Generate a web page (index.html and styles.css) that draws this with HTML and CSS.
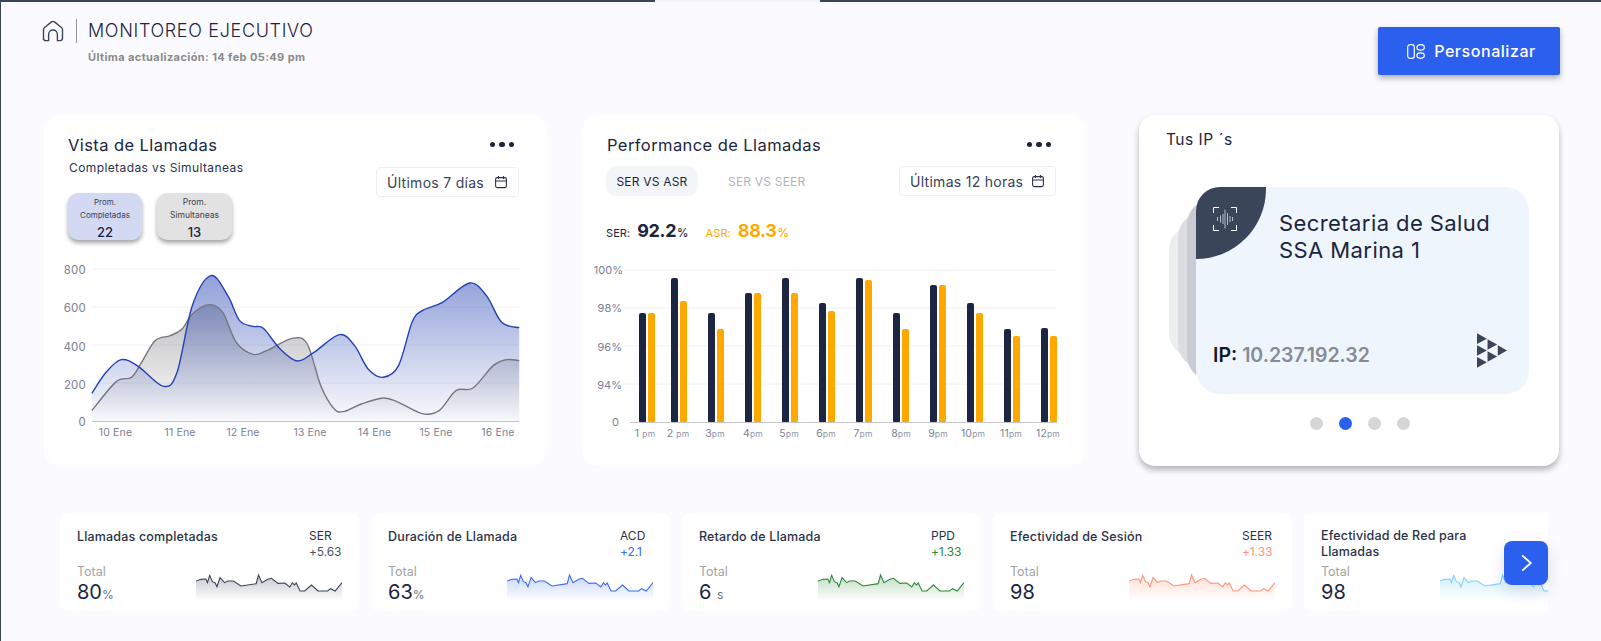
FILE: index.html
```html
<!DOCTYPE html>
<html lang="es">
<head>
<meta charset="utf-8">
<title>Monitoreo Ejecutivo</title>
<link rel="stylesheet" href="styles.css">
</head>
<body>
<svg class="defs" aria-hidden="true">
  <defs>
    <path id="spark-line" vector-effect="non-scaling-stroke" d="M407 230L420 225 433 224 437 235 443 213 450 232 457 235 462 247 470 220 482 235 490 230 505 230 525 245 565 238 571 212 580 235 595 225 605 222 622 237 640 236 653 248 660 235 665 242 670 236 680 260 692 260 710 242 727 260 752 260 760 253 772 260 790 235"/>
    <path id="spark-area" d="M407 230L420 225 433 224 437 235 443 213 450 232 457 235 462 247 470 220 482 235 490 230 505 230 525 245 565 238 571 212 580 235 595 225 605 222 622 237 640 236 653 248 660 235 665 242 670 236 680 260 692 260 710 242 727 260 752 260 760 253 772 260 790 235V290H407Z"/>
    <linearGradient id="sg-dark" x1="0" y1="0" x2="0" y2="1"><stop offset="0" stop-color="#3a455a" stop-opacity=".3"/><stop offset="1" stop-color="#3a455a" stop-opacity="0"/></linearGradient>
    <linearGradient id="sg-blue" x1="0" y1="0" x2="0" y2="1"><stop offset="0" stop-color="#3d6cf0" stop-opacity=".28"/><stop offset="1" stop-color="#3d6cf0" stop-opacity="0"/></linearGradient>
    <linearGradient id="sg-green" x1="0" y1="0" x2="0" y2="1"><stop offset="0" stop-color="#2e8b37" stop-opacity=".3"/><stop offset="1" stop-color="#2e8b37" stop-opacity="0"/></linearGradient>
    <linearGradient id="sg-salmon" x1="0" y1="0" x2="0" y2="1"><stop offset="0" stop-color="#ff9478" stop-opacity=".3"/><stop offset="1" stop-color="#ff9478" stop-opacity="0"/></linearGradient>
    <linearGradient id="sg-sky" x1="0" y1="0" x2="0" y2="1"><stop offset="0" stop-color="#7fd3f7" stop-opacity=".35"/><stop offset="1" stop-color="#7fd3f7" stop-opacity="0"/></linearGradient>
    <linearGradient id="area-blue" gradientUnits="userSpaceOnUse" x1="0" y1="80" x2="0" y2="517"><stop offset="0" stop-color="#2240b0" stop-opacity=".5"/><stop offset="1" stop-color="#2240b0" stop-opacity=".02"/></linearGradient>
    <linearGradient id="area-gray" gradientUnits="userSpaceOnUse" x1="0" y1="167" x2="0" y2="517"><stop offset="0" stop-color="#404048" stop-opacity=".34"/><stop offset="1" stop-color="#404048" stop-opacity=".01"/></linearGradient>
    <symbol id="cal" viewBox="0 0 14 14">
      <rect x="1.6" y="2.6" width="10.8" height="10" rx="1.6"/>
      <path d="M1.6 6h10.8M4.5 1v3M9.5 1v3"/>
    </symbol>
  </defs>
</svg>

<div class="topbar"><span class="seg-a"></span><span class="seg-b"></span><span class="seg-c"></span></div>

<main class="page">
  <header class="header">
    <div class="head-left">
      <div class="head-title">
        <svg class="home" viewBox="0 0 22 22"><path d="M1.5 20V9.6Q1.5 8.4 2.6 7.5L9.5 1.9Q11 .8 12.5 1.9L19.4 7.5Q20.5 8.4 20.5 9.6V18Q20.5 20.6 18 20.6H15.4V14.4A4.4 4.4 0 0 0 6.6 14.4V20.6H4Q1.500 20.6 1.500 18Z"/></svg>
        <h1>MONITOREO EJECUTIVO</h1>
      </div>
      <p class="updated">Última actualización: 14 feb 05:49 pm</p>
    </div>
    <button class="btn-custom">
      <svg class="ico-custom" viewBox="0 0 18 15"><rect x=".7" y=".7" width="6.6" height="13.6" rx="2.4"/><ellipse cx="13.6" cy="3.4" rx="3.7" ry="2.7"/><ellipse cx="13.6" cy="11.6" rx="3.7" ry="2.7"/></svg>
      <span>Personalizar</span>
    </button>
  </header>

  <section class="top-row">
    <article class="card">
      <div class="card-top">
        <div class="title-row">
          <h2>Vista de Llamadas</h2>
          <div class="more"><i></i><i></i><i></i></div>
        </div>
        <div class="filter-row">
          <div>
            <p class="sub">Completadas vs Simultaneas</p>
            <div class="pills">
              <div class="pill pill-blue"><span>Prom.</span><span>Completadas</span><b>22</b></div>
              <div class="pill pill-gray"><span>Prom.</span><span>Simultaneas</span><b>13</b></div>
            </div>
          </div>
          <div class="select select-7"><span>Últimos 7 días</span><svg class="cal"><use href="#cal"/></svg></div>
        </div>
      </div>
      <svg class="chart chart-a" viewBox="44 258 503 187" width="503" height="187">
        <g class="grid">
          <path d="M92 270H519M92 308H519M92 346H519M92 384H519"/>
        </g>
        <path class="base" d="M92 422.5H519"/>
        <g transform="translate(30 250) scale(.3381 .3333)">
          <path class="js-curve area-gray" data-close="1" data-pts="183,485 255,398 300,385 330,340 370,275 415,260 450,240 480,195 530,167 570,190 610,280 660,316 700,305 775,268 820,285 860,410 900,480 930,487 980,465 1045,447 1090,460 1160,494 1210,485 1260,425 1310,417 1370,350 1410,332 1447,335"/>
          <path class="js-curve area-blue" data-close="1" data-pts="183,433 225,370 270,332 320,352 395,412 435,370 480,170 535,80 585,140 620,215 660,232 690,238 740,300 790,336 840,310 915,257 960,290 1000,360 1045,385 1090,350 1130,220 1160,185 1220,160 1300,102 1350,140 1395,220 1447,236"/>
          <path class="js-curve line-gray" data-pts="183,485 255,398 300,385 330,340 370,275 415,260 450,240 480,195 530,167 570,190 610,280 660,316 700,305 775,268 820,285 860,410 900,480 930,487 980,465 1045,447 1090,460 1160,494 1210,485 1260,425 1310,417 1370,350 1410,332 1447,335"/>
          <path class="js-curve line-blue" data-pts="183,433 225,370 270,332 320,352 395,412 435,370 480,170 535,80 585,140 620,215 660,232 690,238 740,300 790,336 840,310 915,257 960,290 1000,360 1045,385 1090,350 1130,220 1160,185 1220,160 1300,102 1350,140 1395,220 1447,236"/>
        </g>
        <g class="ax-y">
          <text x="86" y="275">800</text><text x="86" y="313">600</text><text x="86" y="352">400</text><text x="86" y="390">200</text><text x="86" y="427">0</text>
        </g>
        <g class="ax-x">
          <text x="115.5" y="437">10 Ene</text><text x="180" y="437">11 Ene</text><text x="243" y="437">12 Ene</text><text x="310" y="437">13 Ene</text><text x="374.5" y="437">14 Ene</text><text x="436" y="437">15 Ene</text><text x="498" y="437">16 Ene</text>
        </g>
      </svg>
    </article>

    <article class="card">
      <div class="card-top card-top-b">
        <div class="title-row">
          <h2>Performance de Llamadas</h2>
          <div class="more"><i></i><i></i><i></i></div>
        </div>
        <div class="filter-row filter-row-b">
          <div class="tabs"><span class="tab tab-on">SER VS ASR</span><span class="tab">SER VS SEER</span></div>
          <div class="select select-12"><span>Últimas 12 horas</span><svg class="cal"><use href="#cal"/></svg></div>
        </div>
        <div class="stats">
          <span class="stat"><small>SER:</small><b>92.2</b><em>%</em></span>
          <span class="stat stat-o"><small>ASR:</small><b>88.3</b><em>%</em></span>
        </div>
      </div>
      <svg class="chart chart-b" viewBox="582 258 503 187" width="503" height="187">
        <g class="grid"><path d="M621 270H1057M621 308H1057M621 346H1057M621 384H1057"/></g>
        <g class="bars-n">
          <rect x="639" y="313" width="7" height="110" rx="2"/><rect x="671" y="278" width="7" height="145" rx="2"/><rect x="708" y="313" width="7" height="110" rx="2"/><rect x="745" y="293" width="7" height="130" rx="2"/><rect x="782" y="278" width="7" height="145" rx="2"/><rect x="819" y="303" width="7" height="120" rx="2"/><rect x="856" y="278" width="7" height="145" rx="2"/><rect x="893" y="313" width="7" height="110" rx="2"/><rect x="930" y="285" width="7" height="138" rx="2"/><rect x="967" y="303" width="7" height="120" rx="2"/><rect x="1004" y="329" width="7" height="94" rx="2"/><rect x="1041" y="328" width="7" height="95" rx="2"/>
        </g>
        <g class="bars-o">
          <rect x="648" y="313" width="7" height="110" rx="2"/><rect x="680" y="301" width="7" height="122" rx="2"/><rect x="717" y="329" width="7" height="94" rx="2"/><rect x="754" y="293" width="7" height="130" rx="2"/><rect x="791" y="293" width="7" height="130" rx="2"/><rect x="828" y="311" width="7" height="112" rx="2"/><rect x="865" y="280" width="7" height="143" rx="2"/><rect x="902" y="329" width="7" height="94" rx="2"/><rect x="939" y="285" width="7" height="138" rx="2"/><rect x="976" y="313" width="7" height="110" rx="2"/><rect x="1013" y="336" width="7" height="87" rx="2"/><rect x="1050" y="336" width="7" height="87" rx="2"/>
        </g>
        <path class="base" d="M630 422.5H1057"/>
        <g class="ax-y ax-pct">
          <text x="623" y="273.5">100%</text><text x="622" y="311.500">98%</text><text x="622" y="350.500">96%</text><text x="622" y="388.500">94%</text><text x="619" y="426">0</text>
        </g>
        <g class="ax-x ax-h">
          <text x="645" y="437">1 <tspan>pm</tspan></text><text x="678" y="437">2 <tspan>pm</tspan></text><text x="715" y="437">3<tspan>pm</tspan></text><text x="753" y="437">4<tspan>pm</tspan></text><text x="789" y="437">5<tspan>pm</tspan></text><text x="826" y="437">6<tspan>pm</tspan></text><text x="863" y="437">7<tspan>pm</tspan></text><text x="901" y="437">8<tspan>pm</tspan></text><text x="938" y="437">9<tspan>pm</tspan></text><text x="973" y="437">10<tspan>pm</tspan></text><text x="1011" y="437">11<tspan>pm</tspan></text><text x="1048" y="437">12<tspan>pm</tspan></text>
        </g>
      </svg>
    </article>

    <article class="card card-ip">
      <h3>Tus IP ´s</h3>
      <div class="stage">
        <span class="layer layer-3"></span>
        <span class="layer layer-2"></span>
        <span class="layer layer-1"></span>
        <div class="ipcard">
          <div class="corner">
            <svg class="scan" viewBox="0 0 24 24"><path class="scan-f" d="M6 .5H.5V6M18 .5H23.5V6M6 23.5H.5V18M18 23.5H23.5V18"/><path class="scan-b" d="M4.500 10V14M7.500 8.500V15.500M10 7V17M12 2.500V21.500M14.500 6V18M17 9V15M19.500 10V14"/></svg>
          </div>
          <div class="ip-name">Secretaria de Salud<br>SSA Marina 1</div>
          <div class="ip-foot">
            <div class="ip-addr"><b>IP:</b> <span>10.237.192.32</span></div>
            <svg class="ip-logo" viewBox="1041 700 91 104"><path d="M1041 700L1071 716 1041 732ZM1041 736L1071 752 1041 768ZM1041 772L1071 788 1041 804ZM1073 718L1102 734 1073 750ZM1073 754L1102 770 1073 786ZM1104 736L1132 752 1104 768Z"/></svg>
          </div>
        </div>
      </div>
      <div class="dots"><i></i><i class="on"></i><i></i><i></i></div>
    </article>
  </section>

  <section class="kpi-wrap">
    <div class="kpi-row">
      <article class="kpi kpi-dark">
        <div class="kpi-head"><h4>Llamadas completadas</h4><div class="kpi-delta"><span>SER</span><span class="d">+5.63</span></div></div>
        <div class="kpi-foot">
          <div class="kpi-val"><span class="t">Total</span><span class="v">80<small>%</small></span></div>
          <svg class="spark" viewBox="407 200 383 90" preserveAspectRatio="none"><use href="#spark-area" fill="url(#sg-dark)"/><use href="#spark-line" class="sl"/></svg>
        </div>
      </article>
      <article class="kpi kpi-blue">
        <div class="kpi-head"><h4>Duración de Llamada</h4><div class="kpi-delta"><span>ACD</span><span class="d">+2.1</span></div></div>
        <div class="kpi-foot">
          <div class="kpi-val"><span class="t">Total</span><span class="v">63<small>%</small></span></div>
          <svg class="spark" viewBox="407 200 383 90" preserveAspectRatio="none"><use href="#spark-area" fill="url(#sg-blue)"/><use href="#spark-line" class="sl"/></svg>
        </div>
      </article>
      <article class="kpi kpi-green">
        <div class="kpi-head"><h4>Retardo de Llamada</h4><div class="kpi-delta"><span>PPD</span><span class="d">+1.33</span></div></div>
        <div class="kpi-foot">
          <div class="kpi-val"><span class="t">Total</span><span class="v">6 <small>s</small></span></div>
          <svg class="spark" viewBox="407 200 383 90" preserveAspectRatio="none"><use href="#spark-area" fill="url(#sg-green)"/><use href="#spark-line" class="sl"/></svg>
        </div>
      </article>
      <article class="kpi kpi-salmon">
        <div class="kpi-head"><h4>Efectividad de Sesión</h4><div class="kpi-delta"><span>SEER</span><span class="d">+1.33</span></div></div>
        <div class="kpi-foot">
          <div class="kpi-val"><span class="t">Total</span><span class="v">98</span></div>
          <svg class="spark" viewBox="407 200 383 90" preserveAspectRatio="none"><use href="#spark-area" fill="url(#sg-salmon)"/><use href="#spark-line" class="sl"/></svg>
        </div>
      </article>
      <article class="kpi kpi-sky">
        <div class="kpi-head"><h4 class="wrap">Efectividad de Red para Llamadas</h4></div>
        <div class="kpi-foot">
          <div class="kpi-val"><span class="t">Total</span><span class="v">98</span></div>
          <svg class="spark" viewBox="407 200 383 90" preserveAspectRatio="none"><use href="#spark-area" fill="url(#sg-sky)"/><use href="#spark-line" class="sl"/></svg>
        </div>
      </article>
    </div>
    <button class="next" aria-label="Siguiente"><svg viewBox="0 0 12 18"><path d="M2 2L10 9 2 16"/></svg></button>
  </section>
</main>
<script src="script.js"></script>
</body>
</html>
```

FILE: styles.css
```css
* { box-sizing: border-box; }
html, body { margin: 0; padding: 0; height: 641px; overflow: hidden; }
body {
  background: #fafaff;
  border-left: 1px solid #3a455a;
  font-family: "Inter", "Liberation Sans", sans-serif;
  color: #1c2540;
}
.defs { position: absolute; width: 0; height: 0; }
h1, h2, h3, h4, p { margin: 0; font-weight: 400; }

.topbar { display: flex; height: 2px; }
.seg-a { width: 654px; background: #3a455a; }
.seg-b { width: 165px; background: #f3f3f5; }
.seg-c { flex: 1; background: #3a455a; }

.page { padding: 0 41px 0 43px; }

.header { display: flex; justify-content: space-between; height: 113px; }
.head-left { margin-left: -2px; padding-top: 17px; }
.head-title { display: flex; align-items: center; height: 24px; }
.home { width: 22px; height: 22px; fill: none; stroke: #3a455a; stroke-width: 1.4; }
.head-title h1 {
  margin-left: 12px; padding-left: 11px; border-left: 1px solid #8d93a1;
  font-size: 18px; line-height: 24px; font-weight: 300; letter-spacing: .66px; color: #1c2540;
}
.updated { margin: 7px 0 0 46px; font-size: 11px; line-height: 14px; font-weight: 700; color: #8a8a8a; letter-spacing: .4px; }
.btn-custom {
  display: flex; align-items: center; justify-content: center; gap: 9px;
  width: 182px; height: 48px; margin-top: 25px; padding: 0 0 0 5px;
  background: #2b60ee; border: 0; border-radius: 2px; color: #fff;
  box-shadow: 0 3px 6px rgba(0, 0, 0, .32);
  font: 500 16px "Inter", sans-serif; letter-spacing: .55px;
}
.ico-custom { width: 18px; height: 15px; fill: none; stroke: #fff; stroke-width: 1.2; }

.top-row { display: flex; gap: 35px; }
.card { width: 503px; height: 351px; background: #fff; border-radius: 16px; overflow: hidden; }
.card-top { padding: 21px 28px 0 24px; }
.card-top-b { padding-left: 25px; padding-right: 29px; }
.title-row { display: flex; justify-content: space-between; align-items: center; height: 20px; }
.title-row h2 { font-size: 16.500px; line-height: 20px; font-weight: 400; letter-spacing: .42px; color: #1c2540; transform: translateY(-1px); }
.more { display: flex; gap: 4px; margin-right: 5px; margin-top: -3px; }
.more i { width: 5.500px; height: 5.500px; border-radius: 50%; background: #1c2540; }

.filter-row { display: flex; justify-content: space-between; align-items: flex-start; }
.sub { margin: 4px 0 0 1px; font-size: 12px; line-height: 16px; letter-spacing: .4px; color: #2a3248; }
.pills { display: flex; gap: 15px; margin-top: 17px; }
.pill {
  display: flex; flex-direction: column; align-items: center;
  height: 47px; padding-top: 3px; border-radius: 10px; color: #3a4256;
  font-size: 8px; line-height: 13px; box-shadow: 0 3px 4px rgba(0, 0, 0, .35);
}
.pill b { font-size: 13px; line-height: 16px; font-weight: 500; color: #1c2540; margin-top: 2px; }
.pill-blue { width: 74px; background: #d3d9f2; }
.pill-gray { width: 75px; background: #e2e2e2; font-size: 8.500px; }
.select {
  display: flex; align-items: center; justify-content: space-between;
  height: 30px; padding: 0 10px; margin-top: 11px;
  background: #fff; border: 1px solid #eceef3; border-radius: 4px;
  font-size: 14px; letter-spacing: .28px; color: #3a4256;
}
.select-7 { width: 143px; }
.select-12 { width: 157px; margin-top: 10px; }
.cal { width: 14px; height: 14px; fill: none; stroke: #2a3248; stroke-width: 1.1; flex: none; }

.filter-row-b { align-items: flex-start; }
.tabs { display: flex; gap: 20px; margin: 10px 0 0 -1px; }
.tab { display: flex; align-items: center; height: 30px; padding: 0 10px; font-size: 12px; letter-spacing: .2px; color: #b3b3c0; }
.tab-on { justify-content: center; width: 92px; background: #f3f5f9; border-radius: 10px; color: #1c2540; }
.stats { display: flex; gap: 17px; margin: 25px 0 0 -1px; height: 20px; align-items: center; }
.stat { display: flex; align-items: baseline; color: #1c2540; }
.stat small { font-size: 11px; margin-right: 7px; letter-spacing: .1px; }
.stat b { font-size: 18px; line-height: 20px; font-weight: 700; letter-spacing: -.4px; }
.stat em { font-size: 11.500px; font-style: normal; margin-left: 1px; font-weight: 500; }
.stat-o { color: #ffa800; }

.chart { display: block; }
.chart-a { margin-top: 17px; }
.chart-b { margin-top: 17px; }
.grid path { stroke: #f0f0f4; stroke-width: 1; fill: none; }
.base { stroke: #c5c5c9; stroke-width: 1; fill: none; }
.area-blue { fill: url(#area-blue); stroke: none; }
.area-gray { fill: url(#area-gray); stroke: none; }
.line-blue, .line-gray { fill: none; vector-effect: non-scaling-stroke; }
.line-blue { stroke: #2342b5; stroke-width: 1.4; }
.line-gray { stroke: #76767e; stroke-width: 1.4; }
.ax-y text { font-size: 11.500px; fill: #7b8194; text-anchor: end; letter-spacing: .2px; }
.ax-pct text { font-size: 11px; letter-spacing: 0; }
.ax-x text { font-size: 10.500px; fill: #7b8194; text-anchor: middle; letter-spacing: .15px; }
.ax-h tspan { font-size: 8.500px; fill: #9094a4; }
.bars-n rect { fill: #1c2642; }
.bars-o rect { fill: #ffa800; }

.card-ip {
  width: 420px; margin-left: 19px; padding-top: 15px;
  box-shadow: 0 4px 6px rgba(0, 0, 0, .28); overflow: visible;
}
.card-ip h3 { margin-left: 27px; font-size: 15.500px; line-height: 20px; letter-spacing: .5px; color: #1c2540; }
.stage { position: relative; margin: 37px 0 0 30px; width: 360px; height: 207px; }
.layer { position: absolute; width: 120px; border-radius: 24px; }
.layer-1 { left: 18px; top: 13px; height: 180px; background: #c8cbd3; }
.layer-2 { left: 9px; top: 26px; height: 155px; background: #dcdde0; }
.layer-3 { left: 0; top: 39px; height: 131px; background: #ecedef; }
.ipcard {
  position: absolute; left: 27px; top: 0; width: 333px; height: 207px;
  display: flex; flex-direction: column; justify-content: space-between;
  background: #eff5fd; border-radius: 24px; overflow: hidden;
  padding: 23px 22px 26px 17px;
}
.corner {
  position: absolute; left: 0; top: 0; width: 70px; height: 72px;
  background: #3a455a; border-radius: 0 0 72px 0;
  padding: 20px 0 0 17px;
}
.scan { display: block; width: 24px; height: 24px; fill: none; stroke-width: 1; }
.scan-f { stroke: #fff; }
.scan-b { stroke: #b8c0cc; }
.ip-name { margin-left: 66px; font-size: 22px; line-height: 27px; letter-spacing: .42px; color: #1c2540; }
.ip-foot { display: flex; justify-content: space-between; align-items: center; }
.ip-addr { margin-top: 8px; font-size: 19.500px; font-weight: 600; color: #868b94; }
.ip-addr b { font-weight: 600; color: #14192a; }
.ip-logo { width: 30px; height: 35px; fill: #3a455a; }
.dots { display: flex; gap: 16px; margin: 23px 0 0 171px; }
.dots i { width: 13px; height: 13px; border-radius: 50%; background: #d6d6d6; }
.dots i.on { background: #2b60ee; }

.kpi-wrap { position: relative; width: 1488px; margin: 47px 0 0 16px; }
.kpi-row { display: flex; gap: 12px; overflow: hidden; }
.kpi { flex: none; width: 299px; height: 98px; padding: 14px 0 0 17px; background: #fff; border-radius: 8px; overflow: hidden; }
.kpi-head { display: flex; height: 36px; }
.kpi-head h4 { width: 232px; font-size: 12.500px; line-height: 17px; font-weight: 500; letter-spacing: .17px; color: #2a3248; padding-top: 1px; }
.kpi-head h4.wrap { width: 165px; padding-top: 1px; line-height: 15.500px; }
.kpi-delta { display: flex; flex-direction: column; padding-top: 1px; font-size: 12px; line-height: 16px; color: #2a3248; }
.kpi-delta .d { letter-spacing: -.1px; }
.kpi-foot { display: flex; }
.kpi-val { display: flex; flex-direction: column; width: 119px; }
.t { font-size: 12.500px; line-height: 17px; color: #a3a3a3; }
.v { font-size: 20px; line-height: 24px; color: #1c2540; }
.v small { font-size: 12px; color: #6a7080; }
.spark { width: 146px; height: 30px; margin-top: 8px; display: block; }
.sl { fill: none; stroke: currentColor; stroke-width: 1.1; }
.kpi-dark .d { color: #4a5266; }
.kpi-dark .spark { color: #3a455a; }
.kpi-blue .d, .kpi-blue .spark { color: #3d6cf0; }
.kpi-green .d, .kpi-green .spark { color: #2e8b37; }
.kpi-salmon .d, .kpi-salmon .spark { color: #ff9478; }
.kpi-sky .spark { color: #7fd3f7; }
.next {
  position: absolute; right: 0; top: 28px; width: 44px; height: 44px; padding: 0;
  display: flex; align-items: center; justify-content: center;
  background: #2b60ee; border: 0; border-radius: 8px;
  box-shadow: 0 6px 16px rgba(40, 60, 120, .15);
}
.next svg { width: 13px; height: 20px; fill: none; stroke: #fff; stroke-width: 1.6; }
```

FILE: script.js
```js
// Smooth the chart series (Catmull-Rom to cubic Bézier) from their data points.
document.querySelectorAll('.js-curve').forEach(function (el) {
  var p = el.dataset.pts.trim().split(/\s+/).map(function (s) { return s.split(',').map(Number); });
  var d = 'M' + p[0][0] + ' ' + p[0][1];
  for (var i = 0; i < p.length - 1; i++) {
    var a = p[Math.max(i - 1, 0)], b = p[i], c = p[i + 1], e = p[Math.min(i + 2, p.length - 1)];
    d += 'C' + (b[0] + (c[0] - a[0]) / 6) + ' ' + (b[1] + (c[1] - a[1]) / 6) + ' ' +
         (c[0] - (e[0] - b[0]) / 6) + ' ' + (c[1] - (e[1] - b[1]) / 6) + ' ' + c[0] + ' ' + c[1];
  }
  if (el.dataset.close) { d += 'V517H' + p[0][0] + 'Z'; }
  el.setAttribute('d', d);
});
```
